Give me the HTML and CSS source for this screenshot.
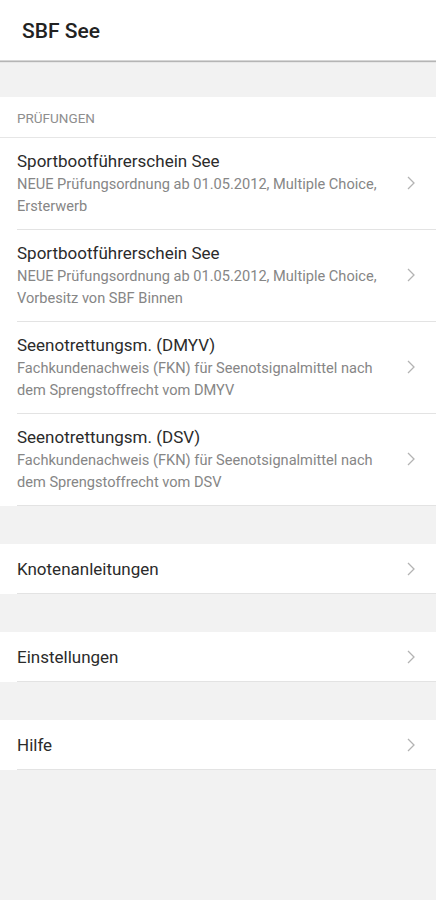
FILE: index.html
```html
<!DOCTYPE html>
<html lang="de">
<head>
    <meta charset="UTF-8">
    <meta name="viewport" content="width=device-width, initial-scale=1.0">
    <title>SBF See</title>
    <link rel="stylesheet" href="styles.css">
</head>
<body>
    <header class="appbar">SBF See</header>

    <div class="section">
        <div class="section-title">PRÜFUNGEN</div>
        <a class="row">
            <div class="row-inner">
                <div class="row-text">
                    <div class="row-title">Sportbootführerschein See</div>
                    <div class="row-sub">NEUE Prüfungsordnung ab 01.05.2012, Multiple Choice, Ersterwerb</div>
                </div>
                <svg class="chevron" width="8" height="14" viewBox="0 0 8 14"><path d="M1 1l6 6-6 6" fill="none" stroke="#b3b3b3" stroke-width="1.3"/></svg>
            </div>
        </a>
        <a class="row">
            <div class="row-inner">
                <div class="row-text">
                    <div class="row-title">Sportbootführerschein See</div>
                    <div class="row-sub">NEUE Prüfungsordnung ab 01.05.2012, Multiple Choice, Vorbesitz von SBF Binnen</div>
                </div>
                <svg class="chevron" width="8" height="14" viewBox="0 0 8 14"><path d="M1 1l6 6-6 6" fill="none" stroke="#b3b3b3" stroke-width="1.3"/></svg>
            </div>
        </a>
        <a class="row">
            <div class="row-inner">
                <div class="row-text">
                    <div class="row-title">Seenotrettungsm. (DMYV)</div>
                    <div class="row-sub">Fachkundenachweis (FKN) für Seenotsignalmittel nach dem Sprengstoffrecht vom DMYV</div>
                </div>
                <svg class="chevron" width="8" height="14" viewBox="0 0 8 14"><path d="M1 1l6 6-6 6" fill="none" stroke="#b3b3b3" stroke-width="1.3"/></svg>
            </div>
        </a>
        <a class="row">
            <div class="row-inner">
                <div class="row-text">
                    <div class="row-title">Seenotrettungsm. (DSV)</div>
                    <div class="row-sub">Fachkundenachweis (FKN) für Seenotsignalmittel nach dem Sprengstoffrecht vom DSV</div>
                </div>
                <svg class="chevron" width="8" height="14" viewBox="0 0 8 14"><path d="M1 1l6 6-6 6" fill="none" stroke="#b3b3b3" stroke-width="1.3"/></svg>
            </div>
        </a>
    </div>

    <div class="section">
        <a class="row">
            <div class="row-inner single">
                <div class="row-title">Knotenanleitungen</div>
                <svg class="chevron" width="8" height="14" viewBox="0 0 8 14"><path d="M1 1l6 6-6 6" fill="none" stroke="#b3b3b3" stroke-width="1.3"/></svg>
            </div>
        </a>
    </div>

    <div class="section">
        <a class="row">
            <div class="row-inner single">
                <div class="row-title">Einstellungen</div>
                <svg class="chevron" width="8" height="14" viewBox="0 0 8 14"><path d="M1 1l6 6-6 6" fill="none" stroke="#b3b3b3" stroke-width="1.3"/></svg>
            </div>
        </a>
    </div>

    <div class="section">
        <a class="row">
            <div class="row-inner single">
                <div class="row-title">Hilfe</div>
                <svg class="chevron" width="8" height="14" viewBox="0 0 8 14"><path d="M1 1l6 6-6 6" fill="none" stroke="#b3b3b3" stroke-width="1.3"/></svg>
            </div>
        </a>
    </div>
</body>
</html>
```

FILE: styles.css
```css
body {
    font-family: Roboto, "Noto Sans", sans-serif;
    margin: 0;
    padding: 0;
    background: #f2f2f2;
    color: #2b2b2b;
}
.appbar {
    background: #fff;
    height: 60px;
    line-height: 62px;
    padding-left: 22px;
    font-size: 21px;
    font-weight: 500;
    color: #222;
    box-shadow: 0 1px 1px rgba(0, 0, 0, 0.25);
    border-bottom: 1px solid #d6d6d6;
}
.section {
    background: #fff;
    margin-top: 36px;
}
.section + .section {
    margin-top: 38px;
}
.section-title {
    height: 40px;
    line-height: 42px;
    padding-left: 17px;
    font-size: 13.5px;
    color: #8e8e8e;
    border-bottom: 1px solid #e6e6e6;
}
.row {
    display: block;
    padding-left: 17px;
    background: #fff;
    cursor: pointer;
}
.row-inner {
    display: flex;
    align-items: center;
    padding: 11px 21px 12px 0;
    border-bottom: 1px solid #e3e3e3;
}
.row-inner.single {
    padding-top: 0;
    padding-bottom: 0;
    box-sizing: border-box;
    height: 50px;
}
.row-text {
    flex: 1;
}
.row-title {
    flex: 1;
    font-size: 17px;
    line-height: 24px;
    color: #2b2b2b;
}
.row-sub {
    font-size: 14.6px;
    line-height: 22px;
    color: #868686;
    padding-right: 18px;
}
.chevron {
    flex: none;
    display: block;
}
```
